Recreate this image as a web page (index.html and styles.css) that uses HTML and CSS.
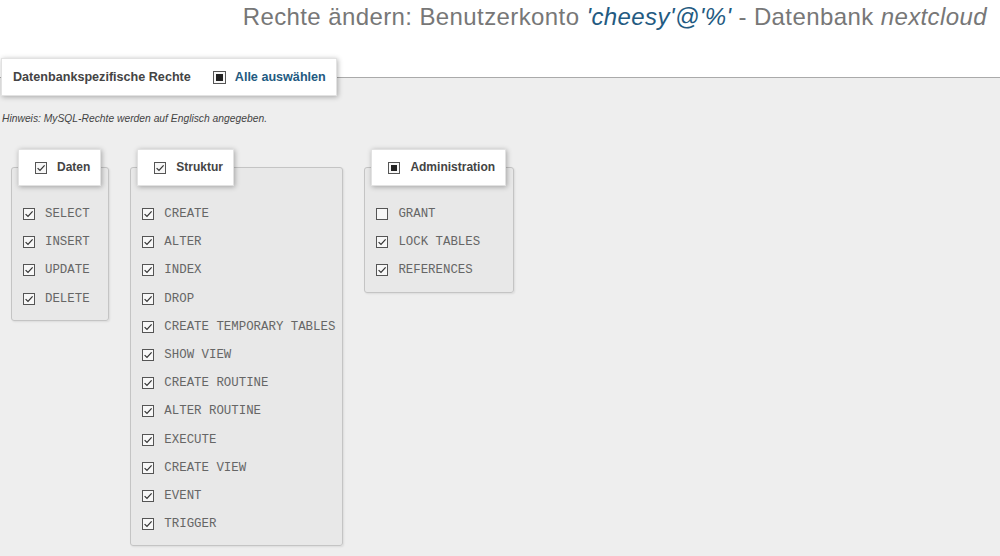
FILE: index.html
```html
<!DOCTYPE html>
<html lang="de">
<head>
<meta charset="utf-8">
<title>Rechte ändern</title>
<link rel="stylesheet" href="styles.css">
</head>
<body>
<h2 class="title">Rechte ändern: Benutzerkonto <i class="acc">'cheesy'@'%'</i> - Datenbank <i>nextcloud</i></h2>
<fieldset class="outer">
  <legend class="outer-legend">
    <span class="outer-label">Datenbankspezifische Rechte</span>
    <svg class="cb cb-lg" viewBox="0 0 13 13"><rect x="0.5" y="0.5" width="12" height="12" fill="#f7f7f7" stroke="#555"/><rect x="3" y="3" width="7" height="7" fill="#222"/></svg>
    <a class="select-all" href="#">Alle auswählen</a>
  </legend>
  <p class="hint">Hinweis: MySQL-Rechte werden auf Englisch angegeben.</p>
  <div class="groups">
    <fieldset class="group">
      <legend class="group-legend">
        <svg class="cb" viewBox="0 0 12 12"><rect x="0.5" y="0.5" width="11" height="11" fill="#f7f7f7" stroke="#555"/><path d="M2.6 6.1 L5 8.5 L9.6 3.4" fill="none" stroke="#333" stroke-width="1.2"/></svg>
        <span>Daten</span>
      </legend>
      <ul class="items">
        <li><svg class="cb" viewBox="0 0 12 12"><rect x="0.5" y="0.5" width="11" height="11" fill="#f7f7f7" stroke="#555"/><path d="M2.6 6.1 L5 8.5 L9.6 3.4" fill="none" stroke="#333" stroke-width="1.2"/></svg><span>SELECT</span></li>
        <li><svg class="cb" viewBox="0 0 12 12"><rect x="0.5" y="0.5" width="11" height="11" fill="#f7f7f7" stroke="#555"/><path d="M2.6 6.1 L5 8.5 L9.6 3.4" fill="none" stroke="#333" stroke-width="1.2"/></svg><span>INSERT</span></li>
        <li><svg class="cb" viewBox="0 0 12 12"><rect x="0.5" y="0.5" width="11" height="11" fill="#f7f7f7" stroke="#555"/><path d="M2.6 6.1 L5 8.5 L9.6 3.4" fill="none" stroke="#333" stroke-width="1.2"/></svg><span>UPDATE</span></li>
        <li><svg class="cb" viewBox="0 0 12 12"><rect x="0.5" y="0.5" width="11" height="11" fill="#f7f7f7" stroke="#555"/><path d="M2.6 6.1 L5 8.5 L9.6 3.4" fill="none" stroke="#333" stroke-width="1.2"/></svg><span>DELETE</span></li>
      </ul>
    </fieldset>
    <fieldset class="group">
      <legend class="group-legend">
        <svg class="cb" viewBox="0 0 12 12"><rect x="0.5" y="0.5" width="11" height="11" fill="#f7f7f7" stroke="#555"/><path d="M2.6 6.1 L5 8.5 L9.6 3.4" fill="none" stroke="#333" stroke-width="1.2"/></svg>
        <span>Struktur</span>
      </legend>
      <ul class="items">
        <li><svg class="cb" viewBox="0 0 12 12"><rect x="0.5" y="0.5" width="11" height="11" fill="#f7f7f7" stroke="#555"/><path d="M2.6 6.1 L5 8.5 L9.6 3.4" fill="none" stroke="#333" stroke-width="1.2"/></svg><span>CREATE</span></li>
        <li><svg class="cb" viewBox="0 0 12 12"><rect x="0.5" y="0.5" width="11" height="11" fill="#f7f7f7" stroke="#555"/><path d="M2.6 6.1 L5 8.5 L9.6 3.4" fill="none" stroke="#333" stroke-width="1.2"/></svg><span>ALTER</span></li>
        <li><svg class="cb" viewBox="0 0 12 12"><rect x="0.5" y="0.5" width="11" height="11" fill="#f7f7f7" stroke="#555"/><path d="M2.6 6.1 L5 8.5 L9.6 3.4" fill="none" stroke="#333" stroke-width="1.2"/></svg><span>INDEX</span></li>
        <li><svg class="cb" viewBox="0 0 12 12"><rect x="0.5" y="0.5" width="11" height="11" fill="#f7f7f7" stroke="#555"/><path d="M2.6 6.1 L5 8.5 L9.6 3.4" fill="none" stroke="#333" stroke-width="1.2"/></svg><span>DROP</span></li>
        <li><svg class="cb" viewBox="0 0 12 12"><rect x="0.5" y="0.5" width="11" height="11" fill="#f7f7f7" stroke="#555"/><path d="M2.6 6.1 L5 8.5 L9.6 3.4" fill="none" stroke="#333" stroke-width="1.2"/></svg><span>CREATE TEMPORARY TABLES</span></li>
        <li><svg class="cb" viewBox="0 0 12 12"><rect x="0.5" y="0.5" width="11" height="11" fill="#f7f7f7" stroke="#555"/><path d="M2.6 6.1 L5 8.5 L9.6 3.4" fill="none" stroke="#333" stroke-width="1.2"/></svg><span>SHOW VIEW</span></li>
        <li><svg class="cb" viewBox="0 0 12 12"><rect x="0.5" y="0.5" width="11" height="11" fill="#f7f7f7" stroke="#555"/><path d="M2.6 6.1 L5 8.5 L9.6 3.4" fill="none" stroke="#333" stroke-width="1.2"/></svg><span>CREATE ROUTINE</span></li>
        <li><svg class="cb" viewBox="0 0 12 12"><rect x="0.5" y="0.5" width="11" height="11" fill="#f7f7f7" stroke="#555"/><path d="M2.6 6.1 L5 8.5 L9.6 3.4" fill="none" stroke="#333" stroke-width="1.2"/></svg><span>ALTER ROUTINE</span></li>
        <li><svg class="cb" viewBox="0 0 12 12"><rect x="0.5" y="0.5" width="11" height="11" fill="#f7f7f7" stroke="#555"/><path d="M2.6 6.1 L5 8.5 L9.6 3.4" fill="none" stroke="#333" stroke-width="1.2"/></svg><span>EXECUTE</span></li>
        <li><svg class="cb" viewBox="0 0 12 12"><rect x="0.5" y="0.5" width="11" height="11" fill="#f7f7f7" stroke="#555"/><path d="M2.6 6.1 L5 8.5 L9.6 3.4" fill="none" stroke="#333" stroke-width="1.2"/></svg><span>CREATE VIEW</span></li>
        <li><svg class="cb" viewBox="0 0 12 12"><rect x="0.5" y="0.5" width="11" height="11" fill="#f7f7f7" stroke="#555"/><path d="M2.6 6.1 L5 8.5 L9.6 3.4" fill="none" stroke="#333" stroke-width="1.2"/></svg><span>EVENT</span></li>
        <li><svg class="cb" viewBox="0 0 12 12"><rect x="0.5" y="0.5" width="11" height="11" fill="#f7f7f7" stroke="#555"/><path d="M2.6 6.1 L5 8.5 L9.6 3.4" fill="none" stroke="#333" stroke-width="1.2"/></svg><span>TRIGGER</span></li>
      </ul>
    </fieldset>
    <fieldset class="group">
      <legend class="group-legend">
        <svg class="cb" viewBox="0 0 12 12"><rect x="0.5" y="0.5" width="11" height="11" fill="#f7f7f7" stroke="#555"/><rect x="3" y="3" width="6" height="6" fill="#222"/></svg>
        <span>Administration</span>
      </legend>
      <ul class="items">
        <li><svg class="cb" viewBox="0 0 12 12"><rect x="0.5" y="0.5" width="11" height="11" fill="#f7f7f7" stroke="#555"/></svg><span>GRANT</span></li>
        <li><svg class="cb" viewBox="0 0 12 12"><rect x="0.5" y="0.5" width="11" height="11" fill="#f7f7f7" stroke="#555"/><path d="M2.6 6.1 L5 8.5 L9.6 3.4" fill="none" stroke="#333" stroke-width="1.2"/></svg><span>LOCK TABLES</span></li>
        <li><svg class="cb" viewBox="0 0 12 12"><rect x="0.5" y="0.5" width="11" height="11" fill="#f7f7f7" stroke="#555"/><path d="M2.6 6.1 L5 8.5 L9.6 3.4" fill="none" stroke="#333" stroke-width="1.2"/></svg><span>REFERENCES</span></li>
      </ul>
    </fieldset>
  </div>
</fieldset>
</body>
</html>
```
FILE: styles.css
```css
html, body {
  margin: 0;
  padding: 0;
}
body {
  background: #ffffff;
  font-family: "Liberation Sans", Arial, sans-serif;
  color: #444;
  min-height: 100vh;
  display: flex;
  flex-direction: column;
  overflow: hidden;
}
.title {
  margin: 3px 13px 0 0;
  text-align: right;
  font-size: 24px;
  letter-spacing: 0.4px;
  font-weight: normal;
  line-height: 27px;
  color: #777;
}
.title .acc {
  color: #235a81;
}
.outer {
  flex: 1;
  margin: 28px 0 0 0;
  padding: 0;
  border: 0;
  border-top: 1px solid #aaa;
  background: #eeeeee;
  min-width: 0;
}
.outer-legend {
  display: flex;
  align-items: center;
  margin-left: 1px;
  padding: 11px 10px 11px 11px;
  background: #fff;
  box-shadow: 1px 1px 5px rgba(0,0,0,0.3);
  border: 1px solid #e2e2e2;
  font-weight: bold;
  font-size: 12.6px;
  line-height: 14px;
  height: 14px;
}
.outer-label {
  color: #444;
}
.cb {
  width: 12px;
  height: 12px;
  flex: none;
  display: block;
}
.cb-lg {
  width: 13px;
  height: 13px;
  margin-left: 22px;
  margin-right: 9px;
}
.select-all {
  color: #235a81;
  text-decoration: none;
}
.hint {
  margin: 17px 0 0 2px;
  font-size: 10.3px;
  line-height: 12px;
  font-style: italic;
  color: #444;
}
.groups {
  display: flex;
  align-items: flex-start;
  gap: 21px;
  margin: 24px 0 0 11px;
}
.group {
  margin: 0;
  padding: 0 7px 7px 6px;
  border: 1px solid #c4c4c4;
  border-radius: 3px;
  background: #e8e8e8;
  box-shadow: 1px 1px 2px rgba(0,0,0,0.08);
}
.group-legend {
  display: flex;
  align-items: center;
  gap: 10px;
  margin: 0;
  padding: 10px 10px 10px 16px;
  height: 15px;
  background: #fff;
  box-shadow: 1px 1px 5px rgba(0,0,0,0.3);
  border: 1px solid #e2e2e2;
  font-weight: bold;
  font-size: 12px;
  line-height: 15px;
  color: #444;
}
.items {
  list-style: none;
  margin: 0;
  padding: 14px 0 0 5px;
}
.items li {
  display: flex;
  align-items: center;
  gap: 10px;
  height: 28.2px;
  font-family: "Liberation Mono", "Courier New", monospace;
  font-size: 12.4px;
  color: #666;
  white-space: nowrap;
}
```
